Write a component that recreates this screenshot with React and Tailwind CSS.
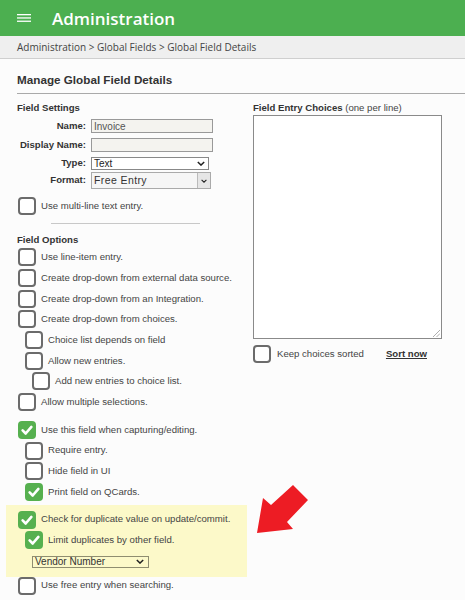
import React from 'react';

const Chevron = ({ className = '' }) => (
  <svg viewBox="0 0 10 6" className={className} fill="none" stroke="#222" strokeWidth="1.8">
    <polyline points="1,1 5,5 9,1" />
  </svg>
);

const Box = ({ checked }) =>
  checked ? (
    <span className="flex h-[18px] w-[18px] shrink-0 items-center justify-center rounded-[4px] bg-[#56b04f]">
      <svg viewBox="0 0 16 16" className="h-[14px] w-[14px]" fill="none" stroke="#fff" strokeWidth="3" strokeLinecap="round" strokeLinejoin="round">
        <polyline points="3,8.5 6.5,12 13,4.5" />
      </svg>
    </span>
  ) : (
    <span className="h-[18px] w-[18px] shrink-0 rounded-[4px] border-2 border-[#6b6b6b] bg-white" />
  );

const Option = ({ checked, level = 0, children }) => {
  const pad = ['pl-[1px]', 'pl-[8px]', 'pl-[15px]'][level];
  return (
    <div className={`flex h-[20.7px] items-center gap-[5px] ${pad}`}>
      <Box checked={checked} />
      <span>{children}</span>
    </div>
  );
};

const LabelRow = ({ label, mt, h, children }) => (
  <div className={`flex items-center ${mt} ${h}`}>
    <span className="w-[69px] text-right font-bold text-[#333]">{label}</span>
    <div className="ml-[5px] flex h-full items-center">{children}</div>
  </div>
);

export default function App() {
  return (
    <div className="relative min-h-[600px] bg-[#fcfcfc] font-['Liberation_Sans',Arial,sans-serif] text-[9.6px] text-[#444]">
      {/* header */}
      <div className="flex h-[36px] items-center bg-[#4caf50] pl-[17px] text-white">
        <svg viewBox="0 0 14 8" className="h-[8px] w-[14px]" fill="#fff">
          <rect x="0" y="0" width="14" height="1.3" />
          <rect x="0" y="3.3" width="14" height="1.3" />
          <rect x="0" y="6.6" width="14" height="1.3" />
        </svg>
        <span className="ml-[21px] font-['Open_Sans',sans-serif] text-[17px] font-semibold leading-none">Administration</span>
      </div>
      <div className="flex h-[23px] items-center border-b border-[#cfcfcf] bg-[#efefef] pl-[17px] font-['Open_Sans',sans-serif] text-[10px] text-[#444]">
        Administration &gt; Global Fields &gt; Global Field Details
      </div>

      <div className="pl-[17px]">
        <div className="mt-[14px] border-b border-[#a9a9a9] pb-[6px]">
          <div className="h-[14px] text-[11.7px] font-bold leading-[14px] text-[#333]">Manage Global Field Details</div>
        </div>

        <div className="flex">
          {/* left column */}
          <div className="w-[236px]">
            <div className="mt-[7px] h-[14px] font-bold leading-[14px] text-[#333]">Field Settings</div>
            <LabelRow label="Name:" mt="mt-[4px]" h="h-[14px]">
              <div className="flex h-[14px] w-[122px] items-center border border-[#999] bg-[#f4f3ef] pl-[2px] text-[10px] text-[#555]">Invoice</div>
            </LabelRow>
            <LabelRow label="Display Name:" mt="mt-[5px]" h="h-[14px]">
              <div className="h-[14px] w-[122px] border border-[#999] bg-[#f4f3ef]" />
            </LabelRow>
            <LabelRow label="Type:" mt="mt-[5px]" h="h-[13px]">
              <div className="flex h-[13px] w-[118px] items-center justify-between border border-[#888] bg-white pl-[2px] pr-[3px] text-[10px] text-[#222]">
                <span>Text</span>
                <Chevron className="h-[5px] w-[8px]" />
              </div>
            </LabelRow>
            <LabelRow label="Format:" mt="mt-[2px]" h="h-[17px]">
              <div className="flex h-[17px] w-[120px] items-center justify-between border border-[#aaa] bg-[#f6f6f6] pl-[2px] text-[10.5px] tracking-[0.4px] text-[#333]">
                <span>Free Entry</span>
                <span className="flex h-full w-[13px] items-center justify-center border-l border-[#bbb] bg-[#e6e6e6]">
                  <Chevron className="h-[4px] w-[6px]" />
                </span>
              </div>
            </LabelRow>

            <div className="mt-[8px] flex h-[18px] items-center gap-[5px] pl-[1px]">
              <Box />
              <span>Use multi-line text entry.</span>
            </div>
            <div className="ml-[34px] mt-[8px] h-px w-[149px] bg-[#c8c8c8]" />

            <div className="mt-[9px] h-[14px] font-bold leading-[14px] text-[#333]">Field Options</div>
            <Option>Use line-item entry.</Option>
            <Option>Create drop-down from external data source.</Option>
            <Option>Create drop-down from an Integration.</Option>
            <Option>Create drop-down from choices.</Option>
            <Option level={1}>Choice list depends on field</Option>
            <Option level={1}>Allow new entries.</Option>
            <Option level={2}>Add new entries to choice list.</Option>
            <Option>Allow multiple selections.</Option>

            <div className="mt-[7px]">
              <Option checked>Use this field when capturing/editing.</Option>
              <Option level={1}>Require entry.</Option>
              <Option level={1}>Hide field in UI</Option>
              <Option level={1} checked>Print field on QCards.</Option>
            </div>

            <div className="-ml-[11px] mt-[3px] w-[241px] bg-[#fcf9c9] pb-[9px] pl-[11px] pt-[4px]">
              <Option checked>Check for duplicate value on update/commit.</Option>
              <Option level={1} checked>Limit duplicates by other field.</Option>
              <div className="ml-[15px] mt-[5px] flex h-[12px] w-[117px] items-center justify-between border border-[#8f8d70] pl-[2px] pr-[4px] text-[10px] text-[#333]">
                <span>Vendor Number</span>
                <Chevron className="h-[5px] w-[8px]" />
              </div>
            </div>

            <div className="flex h-[18px] items-center gap-[5px] pl-[1px]">
              <Box />
              <span>Use free entry when searching.</span>
            </div>
          </div>

          {/* right column */}
          <div className="w-[189px]">
            <div className="mt-[7px] h-[14px] leading-[14px] text-[#444]">
              <span className="font-bold text-[#333]">Field Entry Choices</span> (one per line)
            </div>
            <div className="relative h-[224px] w-[189px] border border-[#8a8a8a] bg-white">
              <svg viewBox="0 0 8 8" className="absolute bottom-[1px] right-[1px] h-[8px] w-[8px]" stroke="#999" strokeWidth="0.8">
                <line x1="1" y1="8" x2="8" y2="1" />
                <line x1="4.5" y1="8" x2="8" y2="4.5" />
              </svg>
            </div>
            <div className="mt-[6px] flex h-[18px] items-center">
              <Box />
              <span className="ml-[6px]">Keep choices sorted</span>
              <span className="ml-[22px] font-bold text-[#333] underline">Sort now</span>
            </div>
          </div>
        </div>
      </div>

      {/* annotation arrow */}
      <svg className="pointer-events-none absolute left-0 top-0 h-[600px] w-[465px]" viewBox="0 0 465 600">
        <polygon points="257,533 263,498 271,505 293,485 308,500 287,522 293,529" fill="#ed1c24" />
      </svg>
    </div>
  );
}
